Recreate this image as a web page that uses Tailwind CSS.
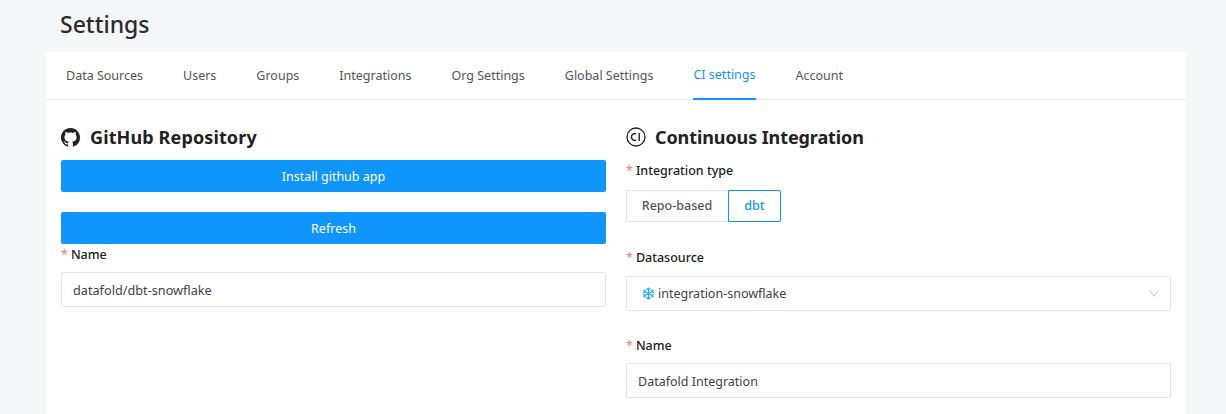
<!DOCTYPE html>
<html>
<head>
<meta charset="utf-8">
<script src="https://cdn.jsdelivr.net/npm/@tailwindcss/browser@4"></script>
</head>
<body class="m-0 h-[414px] overflow-hidden bg-[#f5f7f9] font-['Noto_Sans',sans-serif] text-[12.5px] text-[#444]">
<div class="h-[414px] overflow-hidden pl-[46px] pr-[40px]">
  <div class="h-[52px] pl-[14px] pt-[8px] text-[23px] leading-[33px] font-medium text-[#2b2b2b]">Settings</div>
  <div class="h-[500px] bg-white">
    <nav class="flex h-[48px] gap-[40px] border-b border-[#e8e8e8] pl-[20px] text-[#555]">
      <span class="flex h-[48px] items-center">Data Sources</span>
      <span class="flex h-[48px] items-center">Users</span>
      <span class="flex h-[48px] items-center">Groups</span>
      <span class="flex h-[48px] items-center">Integrations</span>
      <span class="flex h-[48px] items-center">Org Settings</span>
      <span class="flex h-[48px] items-center">Global Settings</span>
      <span class="flex h-[48px] items-center border-b-2 border-[#0f95fb] text-[#0f95fb]">CI settings</span>
      <span class="flex h-[48px] items-center">Account</span>
    </nav>
    <div class="flex gap-[20px] pl-[15px] pt-[23px]">
      <section class="w-[545px]">
        <h2 class="flex h-[28px] items-center gap-[10px] text-[18px] font-bold tracking-[0.12px] text-[#222]">
          <svg viewBox="0 0 16 16" class="h-[19px] w-[19px]" fill="#222"><path d="M8 0C3.58 0 0 3.58 0 8c0 3.54 2.29 6.53 5.47 7.59.4.07.55-.17.55-.38 0-.19-.01-.82-.01-1.49-2.01.37-2.53-.49-2.69-.94-.09-.23-.48-.94-.82-1.13-.28-.15-.68-.52-.01-.53.63-.01 1.08.58 1.23.82.72 1.21 1.87.87 2.33.66.07-.52.28-.87.51-1.07-1.78-.2-3.64-.89-3.64-3.95 0-.87.31-1.59.82-2.15-.08-.2-.36-1.02.08-2.12 0 0 .67-.21 2.2.82.64-.18 1.32-.27 2-.27s1.36.09 2 .27c1.53-1.04 2.2-.82 2.2-.82.44 1.1.16 1.92.08 2.12.51.56.82 1.27.82 2.15 0 3.07-1.87 3.75-3.65 3.95.29.25.54.73.54 1.48 0 1.07-.01 1.93-.01 2.2 0 .21.15.46.55.38A8.01 8.01 0 0 0 16 8c0-4.42-3.58-8-8-8z"/></svg>
          GitHub Repository
        </h2>
        <button class="mt-[9px] block h-[32px] w-full rounded-[2px] bg-[#0f95fb] pt-[2px] text-white">Install github app</button>
        <button class="mt-[20px] block h-[32px] w-full rounded-[2px] bg-[#0f95fb] pt-[2px] text-white">Refresh</button>
        <div class="mt-[1px] flex h-[20px] items-center font-medium text-[#222]"><span class="mr-[3px] font-normal text-[#ff7875]">*</span>Name</div>
        <div class="mt-[7px] flex h-[35px] items-center rounded-[2px] border border-[#e4e4e4] px-[11px] pt-[2px] text-[12.7px]">datafold/dbt-snowflake</div>
      </section>
      <section class="w-[545px]">
        <h2 class="flex h-[28px] items-center gap-[9px] text-[18px] font-bold tracking-[-0.1px] text-[#222]">
          <svg viewBox="0 0 20 20" class="h-[20px] w-[20px]" fill="none" stroke="#222"><circle cx="10" cy="10" r="9" stroke-width="1.3"/><path d="M10.2 6.9A3.4 3.4 0 1 0 10.2 13.1" stroke-width="1.4"/><path d="M13.2 6v8" stroke-width="1.4"/></svg>
          Continuous Integration
        </h2>
        <div class="mt-[10px] flex h-[20px] items-center font-medium text-[#222]"><span class="mr-[3px] font-normal text-[#ff7875]">*</span>Integration type</div>
        <div class="mt-[9px] flex h-[32px] w-fit rounded-[2px]">
          <span class="flex w-[102px] items-center justify-center rounded-l-[2px] border border-r-0 border-[#e4e4e4] pr-[1px] font-medium text-[#555]">Repo-based</span>
          <span class="flex w-[53px] items-center justify-center rounded-r-[2px] border border-[#0f95fb] font-medium text-[#0f95fb]">dbt</span>
        </div>
        <div class="mt-[26px] flex h-[20px] items-center font-medium text-[#222]"><span class="mr-[3px] font-normal text-[#ff7875]">*</span>Datasource</div>
        <div class="mt-[8px] flex h-[35px] items-center rounded-[2px] border border-[#e4e4e4] pl-[15px] pr-[11px]">
          <svg viewBox="0 0 14 14" class="mr-[3px] h-[13px] w-[13px]" fill="none" stroke="#29b5e8" stroke-width="1.3"><path d="M7 .5v13M1.4 3.8l11.2 6.4M12.6 3.8 1.4 10.2M5 1.6 7 3.6l2-2M5 12.4 7 10.4l2 2M1.2 6 3.6 5.2 3 2.6M12.8 6l-2.4-.8.6-2.6M1.2 8l2.4.8-.6 2.6M12.8 8l-2.4.8.6 2.6"/></svg>
          <span class="pt-[2px]">integration-snowflake</span>
          <svg viewBox="0 0 10 7" class="ml-auto h-[7px] w-[10px]" fill="none" stroke="#bfbfbf"><path d="M.4.6 5 6.2 9.6.6"/></svg>
        </div>
        <div class="mt-[25px] flex h-[20px] items-center font-medium text-[#222]"><span class="mr-[3px] font-normal text-[#ff7875]">*</span>Name</div>
        <div class="mt-[7px] flex h-[35px] items-center rounded-[2px] border border-[#e4e4e4] px-[11px] pt-[3px]">Datafold Integration</div>
      </section>
    </div>
  </div>
</div>
</body>
</html>
